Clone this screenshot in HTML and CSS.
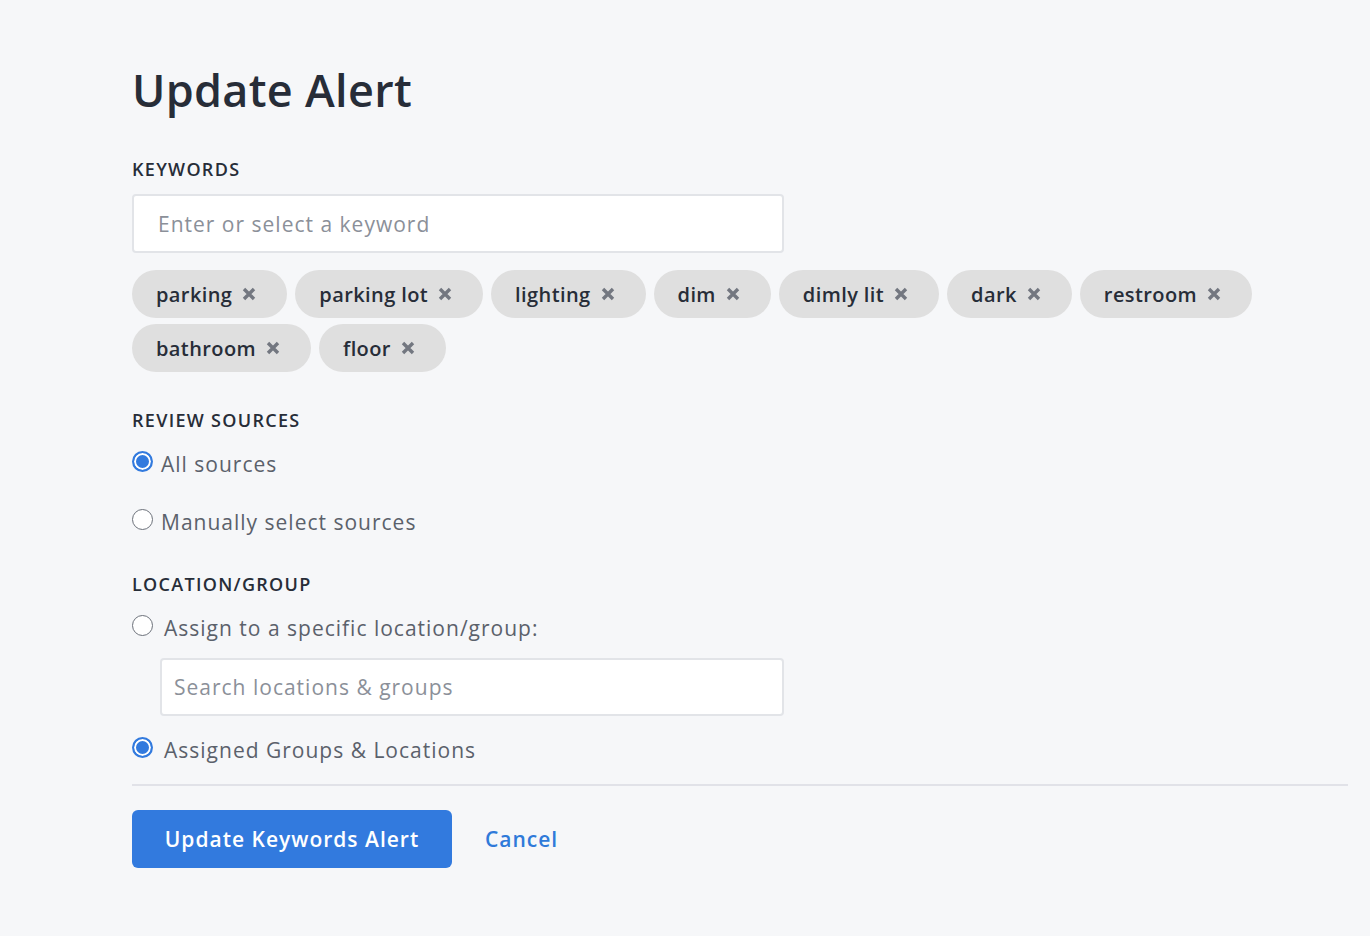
FILE: index.html
```html
<!DOCTYPE html>
<html lang="en">
<head>
  <meta charset="UTF-8" />
  <meta name="viewport" content="width=device-width, initial-scale=1" />
  <title>Update Alert</title>
  <link rel="stylesheet" href="styles.css">
</head>
<body>
  <main class="page">
    <h1 class="page-title">Update Alert</h1>

    <section class="field">
      <div class="field-label">KEYWORDS</div>
      <input class="text-input keyword-input" type="text" placeholder="Enter or select a keyword" />
      <div class="chips">
        <span class="chip">parking <svg class="chip-x" viewBox="0 0 14 14"><path d="M2 2L12 12M12 2L2 12" /></svg></span>
        <span class="chip">parking lot <svg class="chip-x" viewBox="0 0 14 14"><path d="M2 2L12 12M12 2L2 12" /></svg></span>
        <span class="chip">lighting <svg class="chip-x" viewBox="0 0 14 14"><path d="M2 2L12 12M12 2L2 12" /></svg></span>
        <span class="chip">dim <svg class="chip-x" viewBox="0 0 14 14"><path d="M2 2L12 12M12 2L2 12" /></svg></span>
        <span class="chip">dimly lit <svg class="chip-x" viewBox="0 0 14 14"><path d="M2 2L12 12M12 2L2 12" /></svg></span>
        <span class="chip">dark <svg class="chip-x" viewBox="0 0 14 14"><path d="M2 2L12 12M12 2L2 12" /></svg></span>
        <span class="chip">restroom <svg class="chip-x" viewBox="0 0 14 14"><path d="M2 2L12 12M12 2L2 12" /></svg></span>
        <span class="chip">bathroom <svg class="chip-x" viewBox="0 0 14 14"><path d="M2 2L12 12M12 2L2 12" /></svg></span>
        <span class="chip">floor <svg class="chip-x" viewBox="0 0 14 14"><path d="M2 2L12 12M12 2L2 12" /></svg></span>
      </div>
    </section>

    <section class="field sources">
      <div class="field-label">REVIEW SOURCES</div>
      <label class="radio-row"><input type="radio" name="src" checked /> All sources</label>
      <label class="radio-row manual"><input type="radio" name="src" /> Manually select sources</label>
    </section>

    <section class="field location">
      <div class="field-label">LOCATION/GROUP</div>
      <label class="radio-row wide"><input type="radio" name="loc" /> Assign to a specific location/group:</label>
      <input class="text-input search-input" type="text" placeholder="Search locations &amp; groups" />
      <label class="radio-row wide last"><input type="radio" name="loc" checked /> Assigned Groups &amp; Locations</label>
    </section>

    <div class="actions">
      <button class="primary">Update Keywords Alert</button>
      <a class="cancel" href="#">Cancel</a>
    </div>
  </main>
</body>
</html>
```

FILE: styles.css
```css
*, *::before, *::after { box-sizing: border-box; }
body {
  margin: 0;
  font-family: "Open Sans", "Liberation Sans", sans-serif;
  background-color: #f6f7f9;
  color: #272d38;
}

.page {
  padding: 60px 22px 40px 132px;
}

.page-title {
  margin: 0 0 39px;
  font-size: 45px;
  font-weight: 600;
  line-height: 60px;
  letter-spacing: 0.3px;
}

.field-label {
  font-size: 18px;
  font-weight: 600;
  line-height: 20px;
  letter-spacing: 1.3px;
}

.text-input {
  display: block;
  background: #fff;
  border: 2px solid #e2e4e8;
  border-radius: 4px;
  font-family: inherit;
  color: #272d38;
  outline: none;
  font-size: 21px;
  letter-spacing: 1px;
}

.text-input::placeholder { color: #8b9099; }

.keyword-input {
  width: 652px;
  height: 59px;
  margin-top: 15px;
  padding: 0 24px;
}

.chips {
  display: flex;
  flex-wrap: wrap;
  gap: 6px 8px;
  margin-top: 17px;
  max-width: 1130px;
}

.chip {
  display: inline-flex;
  align-items: center;
  height: 48px;
  padding: 0 31px 0 24px;
  border-radius: 24px;
  background: #dfdfdf;
  font-size: 20px;
  font-weight: 600;
  letter-spacing: 0.4px;
}

.chip-x {
  width: 14px;
  height: 14px;
  margin-left: 10px;
  fill: none;
  stroke: #737780;
  stroke-width: 3.4;
}

.sources { margin-top: 38px; }

.radio-row {
  display: flex;
  align-items: center;
  gap: 8px;
  font-size: 21px;
  letter-spacing: 1px;
  color: #5b616b;
  margin-top: 22px;
  height: 24px;
}

.radio-row.manual { margin-top: 34px; }
.radio-row.wide { gap: 11px; }

.radio-row input {
  appearance: none;
  -webkit-appearance: none;
  margin: 0;
  width: 21px;
  height: 21px;
  border: 1.5px solid #6c717a;
  border-radius: 50%;
  background: #fff;
  position: relative;
  top: -3px;
}

.radio-row input:checked {
  border: 2px solid #327ade;
  background: #327ade;
  box-shadow: inset 0 0 0 2px #fff;
}

.location { margin-top: 40px; }

.search-input {
  width: 624px;
  height: 58px;
  margin: 18px 0 22px 28px;
  padding: 0 12px;
}

.radio-row.last { margin-top: 0; }

.actions {
  display: flex;
  align-items: center;
  gap: 33px;
  margin-top: 22px;
  padding-top: 24px;
  border-top: 2px solid #e1e2e8;
}

.primary {
  width: 320px;
  height: 58px;
  border: none;
  border-radius: 6px;
  background: #327ade;
  color: #fff;
  font-family: inherit;
  font-size: 21px;
  font-weight: 600;
  letter-spacing: 1px;
  cursor: pointer;
}

.cancel {
  color: #2f7ad9;
  font-size: 21px;
  font-weight: 600;
  letter-spacing: 1px;
  text-decoration: none;
}
```
